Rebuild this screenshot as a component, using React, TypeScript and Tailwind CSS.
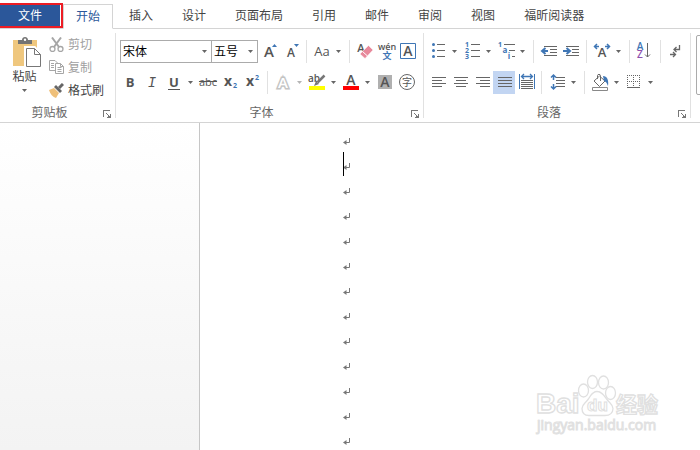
import type { ReactNode } from 'react'
import clsx from 'clsx'

const TABS = ['开始', '插入', '设计', '页面布局', '引用', '邮件', '审阅', '视图', '福昕阅读器']
const LINES = Array.from({ length: 13 }, (_, i) => i)

const GRAY = '#666666'
const BLUE = '#3f76b5'

export default function App() {
  return (
    <div className="flex h-screen flex-col overflow-hidden bg-white font-['Open_Sans','Noto_Sans_CJK_SC',sans-serif] text-xs text-[#444444]">
      <TabBar />
      <div className="flex h-[94px] shrink-0 overflow-hidden border-b border-[#d4d4d4] pt-1 pb-1">
        <ClipboardGroup />
        <FontGroup />
        <ParagraphGroup />
        <div className="min-w-2 flex-1 overflow-hidden pt-0.5 pl-[5px]">
          <div className="h-[60px] w-80 rounded-xs border border-[#ababab]" />
        </div>
      </div>
      <Document />
    </div>
  )
}

function TabBar() {
  return (
    <nav className="relative flex h-[29px] shrink-0 items-end gap-[3px] border-b border-[#d4d4d4] pt-1">
      <button className="h-6 w-[60px] shrink-0 bg-[#2b579a] text-white">文件</button>
      <div className="absolute top-[3px] -left-1 h-[25px] w-[67px] border-2 border-[#ed1c24]" />
      {TABS.map((tab, i) => (
        <button
          key={tab}
          className={clsx(
            'h-[25px] shrink-0 border px-3 whitespace-nowrap',
            i === 0 ? '-mb-px border-[#d4d4d4] border-b-white bg-white text-[#2b579a]' : 'border-transparent',
          )}
        >
          {tab}
        </button>
      ))}
    </nav>
  )
}

function Group({ label, className, children }: { label: string; className: string; children: ReactNode }) {
  return (
    <section className={clsx('flex shrink-0 flex-col border-r border-[#e1e1e1]', className)}>
      {children}
      <div className="mt-auto flex items-end text-[#666666]">
        <span className="flex-1 text-center leading-[11px]">{label}</span>
        <button aria-label={label} className="flex w-4 justify-center">
          <svg width="8" height="8" viewBox="0 0 8 8" fill="none" stroke="#777" shapeRendering="crispEdges">
            <path d="M0.5 7V0.5H7M3 3l4 4M7.5 4v3.5H4" />
            <path d="M5 6h2v1H5z" fill="#777" />
          </svg>
        </button>
      </div>
    </section>
  )
}

function Row({ children }: { children: ReactNode }) {
  return <div className="flex h-[23px] items-center">{children}</div>
}

function Caret({ light }: { light?: boolean }) {
  return (
    <svg width="5" height="3" viewBox="0 0 5 3" className="shrink-0">
      <path d="M0 0h5L2.5 3z" fill={light ? '#b5b5b5' : GRAY} />
    </svg>
  )
}

function Tool({ label, menu, active, light, children }: {
  label: string
  menu?: boolean
  active?: boolean
  light?: boolean
  children: ReactNode
}) {
  return (
    <button
      aria-label={label}
      className={clsx('flex h-[23px] shrink-0 items-center', menu ? 'w-[34px]' : 'w-[22px]', active && 'bg-[#c2d5f2]')}
    >
      <span className="flex w-[22px] shrink-0 justify-center">{children}</span>
      {menu && <span className="pl-[3px]"><Caret light={light} /></span>}
    </button>
  )
}

function Icon({ children }: { children: ReactNode }) {
  return (
    <svg width="22" height="23" viewBox="0 0 22 23" fill="none" stroke={GRAY}>
      {children}
    </svg>
  )
}

function Letter({ x, y, size, fill = '#555555', weight = 600, children }: {
  x: number
  y: number
  size: number
  fill?: string
  weight?: number
  children: string
}) {
  return (
    <text x={x} y={y} fontSize={size} fontWeight={weight} fill={fill} stroke="none" textAnchor="middle">
      {children}
    </text>
  )
}

function Sep() {
  return (
    <span className="flex h-[23px] w-[9px] shrink-0 justify-center">
      <span className="w-px bg-[#e1e1e1]" />
    </span>
  )
}

function Combo({ label, value, className }: { label: string; value: string; className: string }) {
  return (
    <div className={clsx('relative h-[23px] shrink-0', className)}>
      <select
        aria-label={label}
        defaultValue={value}
        className="h-full w-full appearance-none border border-[#ababab] bg-white pl-0.5 text-black"
      >
        <option>{value}</option>
      </select>
      <span className="pointer-events-none absolute top-[10px] right-[5px]"><Caret /></span>
    </div>
  )
}

function ClipboardGroup() {
  return (
    <Group label="剪贴板" className="w-[116px]">
      <div className="flex">
        <button className="flex w-[49px] flex-col items-center pt-1">
          <svg width="30" height="32" viewBox="0 0 30 32" className="ml-1">
            <path d="M1 3h24v26H1z" fill="#efc77e" />
            <path d="M6 7V3h4c0-4 6-4 6 0h4v4z" fill="#737373" />
            <circle cx="13" cy="2.8" r="1.2" fill="#fff" />
            <path d="M13.5 10.5h9l6 6v14h-15z" fill="#fff" stroke="#fff" strokeWidth="3" />
            <path d="M14.5 11.5h8l6 6v12h-14zM22.5 11.5v6h6" fill="#fff" stroke="#777" />
          </svg>
          <span className="leading-4">粘贴</span>
          <span className="pt-1"><Caret /></span>
        </button>
        <div className="flex flex-col">
          <ClipButton label="剪切" disabled>
            <path d="M3 0.5l7 9.5M12 0.5L5 10" strokeWidth="2" />
            <circle cx="3.5" cy="12" r="2.5" strokeWidth="1.3" />
            <circle cx="11.5" cy="12" r="2.5" strokeWidth="1.3" />
          </ClipButton>
          <ClipButton label="复制" disabled>
            <path d="M6 10.5H0.5V0.5H6L8.5 3M2 3.5h3M2 5.5h3M2 7.5h3" />
            <path d="M6.500 3.500h5l3 3v7h-8zM11.500 3.500v3h3M8.500 7.500h4M8.500 9.500h4M8.500 11.500h4" />
          </ClipButton>
          <ClipButton label="格式刷">
            <path d="M0 7l5-2 5 5-3 5c-3-1-6-4-7-8z" fill="#efc07a" stroke="none" />
            <path d="M5 4l2-2 6 6-2 2z" fill="#666" stroke="none" />
            <path d="M10 5l4-4" stroke="#666" strokeWidth="3" />
          </ClipButton>
        </div>
      </div>
    </Group>
  )
}

function ClipButton({ label, disabled, children }: { label: string; disabled?: boolean; children: ReactNode }) {
  return (
    <button disabled={disabled} className="flex h-[23px] items-center gap-1 whitespace-nowrap disabled:text-[#a0a0a0]">
      <svg width="15" height="15" viewBox="0 0 15 15" fill="none" stroke="#a6a6a6">{children}</svg>
      {label}
    </button>
  )
}

function FontGroup() {
  return (
    <Group label="字体" className="w-[308px]">
      <div className="flex flex-col gap-2 pt-[7px] pl-[3px]">
        <Row>
          <Combo label="字体" value="宋体" className="ml-px w-[92px]" />
          <Combo label="字号" value="五号" className="-ml-px w-[47px]" />
          <Tool label="增大字号">
            <Icon>
              <Letter x={11} y={17} size={15}>A</Letter>
              <path d="M14 7h5l-2.500-3z" fill={BLUE} stroke="none" />
            </Icon>
          </Tool>
          <Tool label="减小字号">
            <Icon>
              <Letter x={11} y={17} size={12}>A</Letter>
              <path d="M14 4h5l-2.500 3z" fill={BLUE} stroke="none" />
            </Icon>
          </Tool>
          <Sep />
          <Tool label="更改大小写" menu><span className="text-[13px] font-medium text-[#555555]">Aa</span></Tool>
          <Sep />
          <Tool label="清除所有格式">
            <Icon>
              <Letter x={7} y={12} size={11}>A</Letter>
              <path d="M14.500 5.500l4.500 4.500-8 8.500L6 14z" fill="#e8899b" stroke="#fff" strokeWidth="0.5" />
              <path d="M8.500 11.500l5 4.500" stroke="#fff" />
            </Icon>
          </Tool>
          <Tool label="拼音指南">
            <Icon>
              <Letter x={11} y={10} size={9}>wén</Letter>
              <Letter x={11} y={19} size={9} fill={BLUE} weight={700}>文</Letter>
            </Icon>
          </Tool>
          <Tool label="字符边框">
            <Icon>
              <path d="M2.500 3.500h15v15h-15z" stroke={BLUE} />
              <Letter x={10} y={16} size={14}>A</Letter>
            </Icon>
          </Tool>
        </Row>
        <Row>
          <Tool label="加粗"><span className="text-[13px] font-bold text-[#555555]">B</span></Tool>
          <Tool label="倾斜"><span className="font-['Liberation_Mono',monospace] text-sm text-[#555555] italic">I</span></Tool>
          <Tool label="下划线" menu><span className="border-b border-[#555555] px-px text-[13px] leading-[14px] font-bold text-[#555555]">U</span></Tool>
          <Tool label="删除线"><span className="text-[11px] text-[#555555] line-through">abc</span></Tool>
          <Tool label="下标">
            <Icon>
              <Letter x={9} y={15} size={14} weight={700}>x</Letter>
              <Letter x={16} y={17} size={7} fill={BLUE} weight={700}>2</Letter>
            </Icon>
          </Tool>
          <Tool label="上标">
            <Icon>
              <Letter x={9} y={15} size={14} weight={700}>x</Letter>
              <Letter x={16} y={9} size={7} fill={BLUE} weight={700}>2</Letter>
            </Icon>
          </Tool>
          <Sep />
          <Tool label="文本效果" menu light>
            <Icon>
              <text x="11" y="17" fontSize="15" fontWeight="600" textAnchor="middle" fill="#fff" stroke="#c4c4c4" strokeWidth="3" paintOrder="stroke">A</text>
            </Icon>
          </Tool>
          <Tool label="突出显示" menu>
            <Icon>
              <Letter x={8} y={11} size={10}>ab</Letter>
              <path d="M18.500 4.500l-7 7" stroke="#777" strokeWidth="2.500" />
              <path d="M10 10l3 3-5 2z" fill="#777" stroke="none" />
              <path d="M3 15h16v4H3z" fill="#ffff00" stroke="none" />
            </Icon>
          </Tool>
          <Tool label="字体颜色" menu>
            <Icon>
              <Letter x={11} y={14} size={14}>A</Letter>
              <path d="M3 15h16v4H3z" fill="#ff0000" stroke="none" />
            </Icon>
          </Tool>
          <Tool label="字符底纹">
            <Icon>
              <path d="M4 4h14v14H4z" fill="#b0b0b0" stroke="none" />
              <Letter x={11} y={16} size={14}>A</Letter>
            </Icon>
          </Tool>
          <Tool label="带圈字符">
            <Icon>
              <circle cx="11" cy="11" r="7.500" />
              <Letter x={11} y={15} size={10} weight={400}>字</Letter>
            </Icon>
          </Tool>
        </Row>
      </div>
    </Group>
  )
}

function ParagraphGroup() {
  return (
    <Group label="段落" className="w-[267px]">
      <div className="flex flex-col gap-2 pt-[7px] pl-[3px]">
        <Row>
          <Tool label="项目符号" menu>
            <Icon>
              <path d="M10 4.500h8M10 10.500h8M10 16.500h8" />
              <g fill={BLUE} stroke="none">
                <circle cx="6.500" cy="4.500" r="1.500" />
                <circle cx="6.500" cy="10.500" r="1.500" />
                <circle cx="6.500" cy="16.500" r="1.500" />
              </g>
            </Icon>
          </Tool>
          <Tool label="编号" menu>
            <Icon>
              <path d="M10 4.500h9M10 10.500h9M10 16.500h9" />
              <Letter x={6} y={7} size={7} fill={BLUE} weight={700}>1</Letter>
              <Letter x={6} y={13} size={7} fill={BLUE} weight={700}>2</Letter>
              <Letter x={6} y={19} size={7} fill={BLUE} weight={700}>3</Letter>
            </Icon>
          </Tool>
          <Tool label="多级列表" menu>
            <Icon>
              <path d="M9 4.500h11M14 10.500h6M17 16.500h3" />
              <Letter x={5} y={7} size={7} fill={BLUE} weight={700}>1</Letter>
              <Letter x={10} y={13} size={8} fill={BLUE} weight={700}>a</Letter>
              <Letter x={14} y={19} size={8} fill={BLUE} weight={700}>i</Letter>
            </Icon>
          </Tool>
          <Sep />
          <Tool label="减少缩进量">
            <Icon>
              <path d="M6 6.500h13M12 9.500h7M12 12.500h7M6 15.500h13" />
              <path d="M10 11H5M7.500 8L4 11l3.500 3" stroke={BLUE} strokeWidth="2" />
            </Icon>
          </Tool>
          <Tool label="增加缩进量">
            <Icon>
              <path d="M6 6.500h13M12 9.500h7M12 12.500h7M6 15.500h13" />
              <path d="M3 11h6M6.500 8L10 11l-3.500 3" stroke={BLUE} strokeWidth="2" />
            </Icon>
          </Tool>
          <Sep />
          <Tool label="中文版式" menu>
            <Icon>
              <Letter x={11} y={17} size={13}>A</Letter>
              <path d="M3.500 6.500H8M6 4L3.500 6.500 6 9M18.500 6.500H14M16 4l2.500 2.500L16 9" stroke={BLUE} strokeWidth="1.500" />
            </Icon>
          </Tool>
          <Sep />
          <Tool label="排序">
            <Icon>
              <Letter x={6} y={10} size={10} fill={BLUE}>A</Letter>
              <Letter x={6} y={18} size={10} fill="#8e4fae">Z</Letter>
              <path d="M13.500 3v14M11 14.500l2.500 2.500 2.500-2.500" />
            </Icon>
          </Tool>
          <Sep />
          <Tool label="显示编辑标记">
            <Icon>
              <path d="M14.500 5v4.500H9M11.500 7L9 9.500l2.500 2.500M5 14.500h5M8 12l2.500 2.500L8 17" strokeWidth="1.300" />
            </Icon>
          </Tool>
        </Row>
        <Row>
          <Tool label="左对齐"><Icon><path d="M5 6.500h14M5 9.500h10M5 12.500h14M5 15.500h10" /></Icon></Tool>
          <Tool label="居中"><Icon><path d="M5 6.500h14M7 9.500h10M5 12.500h14M7 15.500h10" /></Icon></Tool>
          <Tool label="右对齐"><Icon><path d="M5 6.500h14M9 9.500h10M5 12.500h14M9 15.500h10" /></Icon></Tool>
          <Tool label="两端对齐" active><Icon><path d="M5 6.500h14M5 9.500h14M5 12.500h14M5 15.500h14" /></Icon></Tool>
          <Tool label="分散对齐">
            <Icon>
              <path d="M4.500 3v15M19.500 3v15" stroke={BLUE} />
              <path d="M6.500 5.500h11M9 3L6.500 5.500 9 8M15 3l2.500 2.500L15 8" stroke={BLUE} strokeWidth="1.300" />
              <path d="M6 9.500h12M6 11.500h12M6 13.500h12M6 15.500h12M6 17.500h12" />
            </Icon>
          </Tool>
          <Sep />
          <Tool label="行距" menu>
            <Icon>
              <path d="M10 6.500h9M10 9.500h9M10 12.500h9M10 15.500h9" />
              <path d="M7.500 4v5M5 6.500L7.500 4 10 6.500M7.500 13v5M5 15.500L7.500 18l2.500-2.500" stroke={BLUE} strokeWidth="1.500" />
            </Icon>
          </Tool>
          <Sep />
          <Tool label="底纹" menu>
            <Icon>
              <path d="M10.500 5l5.500 5-5.500 5.500L5 10z" />
              <path d="M8.500 8V4.500c0-1.500 3-1.500 3 0V10" />
              <path d="M14 5c4 0 6 4 5 10-1-2-1-4-4-5z" fill={BLUE} stroke="none" />
              <path d="M3.500 16.500h15v3h-15z" stroke="#888" fill="#fff" />
            </Icon>
          </Tool>
          <Tool label="边框" menu>
            <Icon>
              <path d="M4 4.500h13M4 10.500h13M4.500 4v12M10.500 4v12M16.500 4v12" strokeDasharray="1 1" />
              <path d="M4 16.500h13" />
            </Icon>
          </Tool>
        </Row>
      </div>
    </Group>
  )
}

function Document() {
  return (
    <main className="relative flex min-h-0 flex-1">
      <div className="w-[200px] shrink-0 border-r border-[#c6c6c6] bg-linear-to-b from-white to-[#f3f3f3]" />
      <div className="flex-1 overflow-hidden pt-1.5 pl-[143px]">
        {LINES.map(line => (
          <div key={line} className="relative flex h-[25px] items-center">
            {line === 1 && <span className="absolute -top-0.5 left-0 h-6 w-px bg-black" />}
            <svg width="8" height="9" viewBox="0 0 8 9" fill="none" stroke="#777">
              <path d="M6.500 1v4.500H1" />
              <path d="M3.500 3v5L0 5.500z" fill="#777" stroke="none" />
            </svg>
          </div>
        ))}
      </div>
      <Watermark />
    </main>
  )
}

function Watermark() {
  return (
    <svg
      width="130"
      height="64"
      viewBox="0 0 130 64"
      className="absolute right-[35px] bottom-3 font-['Liberation_Sans','Noto_Sans_CJK_SC',sans-serif]"
      fill="#fff"
      stroke="#e0e0e0"
      strokeWidth="1.300"
    >
      <text x="1" y="39" fontSize="28" fontWeight="700">Bai</text>
      <ellipse cx="48.500" cy="16.500" rx="5" ry="6.500" />
      <ellipse cx="57.500" cy="8" rx="5" ry="6.500" />
      <ellipse cx="68.500" cy="8.500" rx="5" ry="6.500" />
      <ellipse cx="75.500" cy="19" rx="5" ry="6.500" />
      <path d="M62 17.500c5 0 7 4 10 8s6 5 6 9-3 7-8 7H54c-5 0-7-3-7-7s3-5 6-9 4-8 9-8z" />
      <text x="52" y="37" fontSize="17" fontWeight="700" strokeWidth="1">du</text>
      <text x="81" y="38" fontSize="21" fontWeight="700">经验</text>
      <text x="2" y="56" fontSize="14" strokeWidth="1" className="font-['Open_Sans',sans-serif]">jingyan.baidu.com</text>
    </svg>
  )
}
